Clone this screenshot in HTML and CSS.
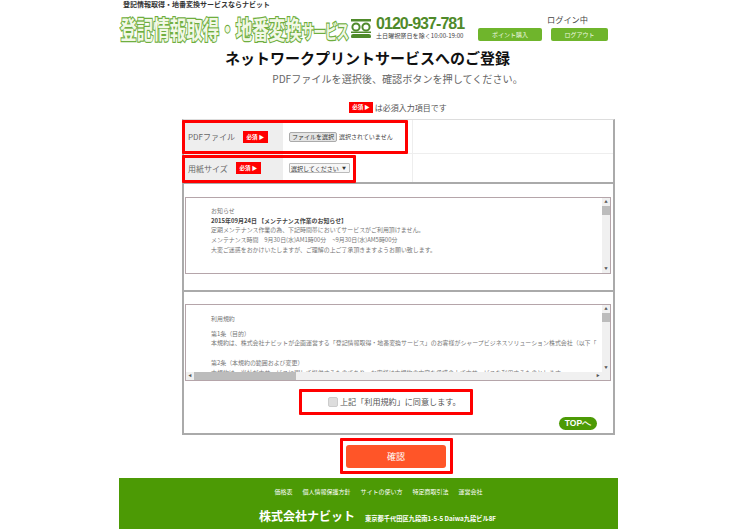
FILE: index.html
```html
<!DOCTYPE html>
<html lang="ja">
<head>
  <meta charset="UTF-8">
  <title>ネットワークプリントサービスへのご登録</title>
  <meta name="viewport" content="width=device-width, initial-scale=1.0">
  <link rel="stylesheet" href="styles.css">
</head>

<body>
  <div class="page">

    <header class="site-header">
      <p class="tagline">登記情報取得・地番変換サービスならナビット</p>
      <div class="header-main">
        <div class="logo"><span class="logo-inner">登記情報取得・地番変換<small>サービス</small></span></div>
        <div class="freedial">
          <svg class="freedial-icon" width="20" height="19" viewBox="0 0 20 19">
            <rect x="0" y="0" width="20" height="2.5" fill="#4f8a2a"/>
            <circle cx="5" cy="8" r="3.6" fill="none" stroke="#4f8a2a" stroke-width="2"/>
            <circle cx="15" cy="8" r="3.6" fill="none" stroke="#4f8a2a" stroke-width="2"/>
            <rect x="0" y="12.5" width="20" height="1.5" fill="#4f8a2a"/>
            <rect x="0" y="15" width="20" height="4.5" rx="2.2" fill="#4f8a2a"/>
          </svg>
          <div class="freedial-text">
            <div class="phone">0120-937-781</div>
            <div class="hours">土日曜祝祭日を除く10:00-19:00</div>
          </div>
        </div>
        <div class="account">
          <div class="login-state">ログイン中</div>
          <div class="account-btns">
            <a class="green-btn btn-point">ポイント購入</a>
            <a class="green-btn btn-logout">ログアウト</a>
          </div>
        </div>
      </div>
    </header>

    <h1>ネットワークプリントサービスへのご登録</h1>
    <p class="lead">PDFファイルを選択後、確認ボタンを押してください。</p>
    <p class="required-note"><span class="badge">必須 ▶</span> は必須入力項目です</p>

    <form class="form">
      <div class="form-row row-pdf">
        <div class="label-cell">PDFファイル <span class="badge badge-pdf">必須 ▶</span></div>
        <div class="value-cell">
          <button type="button" class="file-btn">ファイルを選択</button>
          <span class="file-name">選択されていません</span>
        </div>
        <div class="blank-cell"></div>
      </div>
      <div class="form-row row-size">
        <div class="label-cell">用紙サイズ <span class="badge badge-size">必須 ▶</span></div>
        <div class="value-cell">
          <div class="select">選択してください <span class="select-arrow">▼</span></div>
        </div>
        <div class="blank-cell"></div>
      </div>

      <section class="notice-section">
        <div class="scroll-box">
          <div class="box-text">
            <p>お知らせ</p>
            <p class="strong">2015年09月24日 【メンテナンス作業のお知らせ】</p>
            <p>定期メンテナンス作業の為、下記時間帯においてサービスがご利用頂けません。</p>
            <p>メンテナンス時間　9月30日(水)AM1時00分　~9月30日(水)AM5時00分</p>
            <p>大変ご迷惑をおかけいたしますが、ご理解の上ご了承頂きますようお願い致します。</p>
          </div>
          <div class="vbar">
            <span class="arrow">▲</span>
            <span class="thumb"></span>
            <span class="arrow arrow-down">▼</span>
          </div>
        </div>
      </section>

      <section class="terms-section">
        <div class="scroll-box terms-box">
          <div class="box-text">
            <p class="terms-title">利用規約</p>
            <p>第1条（目的）</p>
            <p class="nowrap">本規約は、株式会社ナビットが企画運営する「登記情報取得・地番変換サービス」のお客様がシャープビジネスソリューション株式会社（以下「</p>
            <p>&nbsp;</p>
            <p>第2条（本規約の範囲および変更）</p>
            <p class="nowrap">本規約は、当社が本サービスに関して提供するものであり、お客様は本規約の内容を承諾の上で本サービスを利用するものとします。</p>
          </div>
          <div class="vbar">
            <span class="arrow">▲</span>
            <span class="thumb"></span>
            <span class="arrow arrow-down">▼</span>
          </div>
          <div class="hbar">
            <span class="arrow">◀</span>
            <span class="hthumb"></span>
            <span class="arrow arrow-right">▶</span>
          </div>
        </div>
        <label class="agree"><input type="checkbox" class="agree-check"> 上記「利用規約」に同意します。</label>
        <div class="top-link"><a class="top-btn">TOPへ</a></div>
      </section>

      <!-- annotations drawn over the form -->
      <span class="mark mark-pdf"></span>
      <span class="mark mark-size"></span>
      <span class="mark mark-agree"></span>
    </form>

    <div class="submit-wrap">
      <button type="button" class="submit-btn">確認</button>
      <span class="mark mark-submit"></span>
    </div>

    <footer class="site-footer">
      <nav class="footer-links">
        <a>価格表</a><a>個人情報保護方針</a><a>サイトの使い方</a><a>特定商取引法</a><a>運営会社</a>
      </nav>
      <div class="company">
        <strong>株式会社ナビット</strong>
        <span>東京都千代田区九段南1-5-5 Daiwa九段ビル8F</span>
      </div>
    </footer>

  </div>
</body>
</html>
```

FILE: styles.css
```css
body {
  margin: 0;
  padding: 0;
  background: #fff;
  color: #555;
  font-family: 'Noto Sans CJK JP', 'Liberation Sans', sans-serif;
  overflow: hidden;
}

p {
  margin: 0;
}

.page {
  width: 499px;
  margin-left: 119px;
}

/* header */
.site-header {
  height: 48px;
}

.tagline {
  padding-left: 4px;
  font-size: 7px;
  line-height: 8px;
  font-weight: bold;
  color: #333;
}

.header-main {
  display: flex;
  align-items: flex-start;
  padding-top: 6px;
}

.logo {
  width: 232px;
  height: 28px;
  flex-shrink: 0;
  overflow: visible;
}

.logo-inner {
  display: block;
  padding-left: 2px;
  font-size: 25px;
  line-height: 28px;
  font-weight: bold;
  white-space: nowrap;
  color: #f2f8e6;
  -webkit-text-stroke: 2.5px #6fae3f;
  paint-order: stroke fill;
  transform: scaleX(0.66);
  transform-origin: left top;
}

.logo-inner small {
  font-size: 19px;
  letter-spacing: -1.5px;
}

.freedial {
  display: flex;
  align-items: flex-start;
  width: 127px;
  padding-top: 3px;
  flex-shrink: 0;
}

.freedial-icon {
  margin-top: 2px;
  margin-right: 5px;
}

.phone {
  font-family: 'Liberation Sans', sans-serif;
  font-size: 16px;
  line-height: 14px;
  font-weight: bold;
  letter-spacing: -0.95px;
  color: #4f8a2a;
  white-space: nowrap;
}

.hours {
  margin-top: 1px;
  font-size: 6.1px;
  line-height: 7px;
  color: #444;
  white-space: nowrap;
}

.account {
  margin-top: -1px;
  width: 131px;
}

.login-state {
  padding-left: 69px;
  font-size: 8.2px;
  line-height: 12px;
  color: #444;
}

.account-btns {
  display: flex;
  gap: 9px;
  margin-top: 3px;
}

.green-btn {
  display: block;
  height: 13px;
  line-height: 13px;
  border-radius: 2px;
  background: #6fb52c;
  color: #eef8e0;
  font-size: 6px;
  text-align: center;
}

.btn-point {
  width: 64px;
}

.btn-logout {
  width: 57px;
}

/* headings */
h1 {
  margin: 0;
  padding-right: 2px;
  font-size: 15px;
  line-height: 20px;
  font-weight: bold;
  color: #111;
  text-align: center;
}

.lead {
  margin-top: 4px;
  padding-left: 58px;
  font-size: 10.1px;
  line-height: 14px;
  color: #666;
  text-align: center;
}

.required-note {
  margin-top: 16px;
  padding-left: 230px;
  font-size: 8px;
  line-height: 11px;
  color: #555;
  white-space: nowrap;
}

.badge {
  display: inline-block;
  width: 24px;
  height: 11px;
  line-height: 11px;
  background: #f00;
  color: #fff;
  font-size: 5.5px;
  font-weight: bold;
  text-align: center;
  vertical-align: top;
}

/* form */
.form {
  position: relative;
  width: 429px;
  margin: 6px 0 0 63px;
  border: solid #aaa;
  border-width: 0 2px 2px 2px;
  border-top: 1px solid #ddd;
}

.form-row {
  display: grid;
  grid-template-columns: 99px 130px 1fr;
  border-bottom: 1px solid #eee;
}

.row-pdf {
  height: 33px;
}

.row-size {
  height: 28px;
  border-bottom: 2px solid #aaa;
}

.label-cell {
  display: flex;
  align-items: center;
  padding-left: 4px;
  background: #eee;
  font-size: 8px;
  color: #666;
}

.badge-pdf {
  margin-left: 8px;
  width: 25px;
  height: 12px;
  line-height: 12px;
}

.badge-size {
  margin-left: 8px;
  width: 25px;
  height: 12px;
  line-height: 12px;
}

.value-cell {
  display: flex;
  align-items: center;
  padding-left: 6px;
  border-right: 1px solid #eee;
}

.file-btn {
  width: 48px;
  height: 10px;
  margin: 0 2px 0 0;
  padding: 0;
  border: 1px solid #aaa;
  border-radius: 2px;
  background: #e4e4e4;
  font-family: inherit;
  font-size: 6px;
  line-height: 8px;
  color: #333;
  white-space: nowrap;
}

.file-name {
  font-size: 6px;
  color: #444;
  white-space: nowrap;
}

.select {
  width: 58px;
  height: 8px;
  padding: 0 0 0 1px;
  border: 1px solid #bbb;
  border-radius: 1px;
  background: #f6f6f6;
  font-size: 6px;
  line-height: 8px;
  color: #333;
  white-space: nowrap;
}

.select-arrow {
  font-size: 4px;
  margin-left: 2px;
  vertical-align: 1px;
}

.notice-section {
  height: 93px;
  padding: 13px 2px 0 1px;
  border-bottom: 2px solid #aaa;
}

.scroll-box {
  position: relative;
  display: grid;
  grid-template-columns: 1fr 8px;
  height: 75px;
  border: 1px solid #b5a5aa;
  overflow: hidden;
}

.box-text {
  padding: 8px 0 0 25px;
  font-size: 5.95px;
  line-height: 9.7px;
  color: #777;
  overflow: hidden;
}

.strong {
  font-weight: bold;
  color: #444;
}

.nowrap {
  white-space: nowrap;
}

.vbar {
  display: flex;
  flex-direction: column;
  background: #f0f0f0;
}

.arrow {
  height: 8px;
  font-size: 3.5px;
  line-height: 8px;
  text-align: center;
  color: #555;
}

.arrow-down {
  margin-top: auto;
}

.thumb {
  height: 9px;
  background: #bcbcbc;
}

.terms-section {
  padding: 12px 2px 0 1px;
}

.terms-box {
  grid-template-rows: 1fr 8px;
}

.terms-title {
  margin-bottom: 5px;
}

.terms-box .box-text {
  padding-top: 9px;
}

.terms-box .vbar {
  grid-column: 2;
  grid-row: 1;
}

.hbar {
  grid-column: 1 / 3;
  grid-row: 2;
  display: flex;
  background: #f0f0f0;
}

.hbar .arrow {
  width: 8px;
  flex-shrink: 0;
}

.hthumb {
  width: 102px;
  background: #bcbcbc;
}

.arrow-right {
  margin-left: auto;
  margin-right: 8px;
}

.agree {
  display: flex;
  align-items: center;
  gap: 2px;
  height: 11px;
  margin: 15px 0 0 143px;
  font-size: 8.1px;
  line-height: 11px;
  color: #555;
  white-space: nowrap;
}

.agree-check {
  appearance: none;
  width: 10px;
  height: 10px;
  margin: 0;
  border: 1px solid #ccc;
  border-radius: 2px;
  background: #ddd;
}

.top-link {
  display: flex;
  justify-content: flex-end;
  height: 16px;
  margin-top: 10px;
  padding-right: 14px;
}

.top-btn {
  width: 38px;
  height: 13px;
  border-radius: 7px;
  background: #4c9a05;
  color: #fff;
  font-family: 'Liberation Sans', sans-serif;
  font-size: 8.5px;
  font-weight: bold;
  line-height: 13px;
  text-align: center;
}

/* red annotation frames */
.mark {
  position: absolute;
  box-sizing: border-box;
  border: 3px solid #f00;
  border-radius: 1px;
}

.mark-pdf {
  left: -2px;
  top: 0;
  width: 226px;
  height: 34px;
}

.mark-size {
  left: -2px;
  top: 35px;
  width: 174px;
  height: 28px;
}

.mark-agree {
  left: 115px;
  top: 269px;
  width: 174px;
  height: 26px;
}

.mark-submit {
  left: 221px;
  top: 3px;
  width: 113px;
  height: 36px;
}

.submit-wrap {
  position: relative;
  display: flex;
  justify-content: flex-start;
  padding: 10px 0 0 227px;
}

.submit-btn {
  width: 100px;
  height: 23px;
  padding: 0;
  border: 0;
  border-radius: 3px;
  background: #ff5528;
  color: #fff;
  font-family: inherit;
  font-size: 9px;
  font-weight: normal;
}

/* footer */
.site-footer {
  height: 52px;
  margin-top: 10px;
  background: #4c9a05;
  color: #fff;
  text-align: center;
}

.footer-links {
  display: flex;
  justify-content: center;
  gap: 10px;
  padding: 10px 0 0 20px;
  font-size: 6px;
  line-height: 8px;
}

.company {
  display: flex;
  align-items: baseline;
  justify-content: center;
  gap: 10px;
  margin-top: 12px;
  padding-left: 18px;
}

.company strong {
  font-size: 12px;
  line-height: 16px;
}

.company span {
  font-size: 6.25px;
  font-weight: bold;
}
```
